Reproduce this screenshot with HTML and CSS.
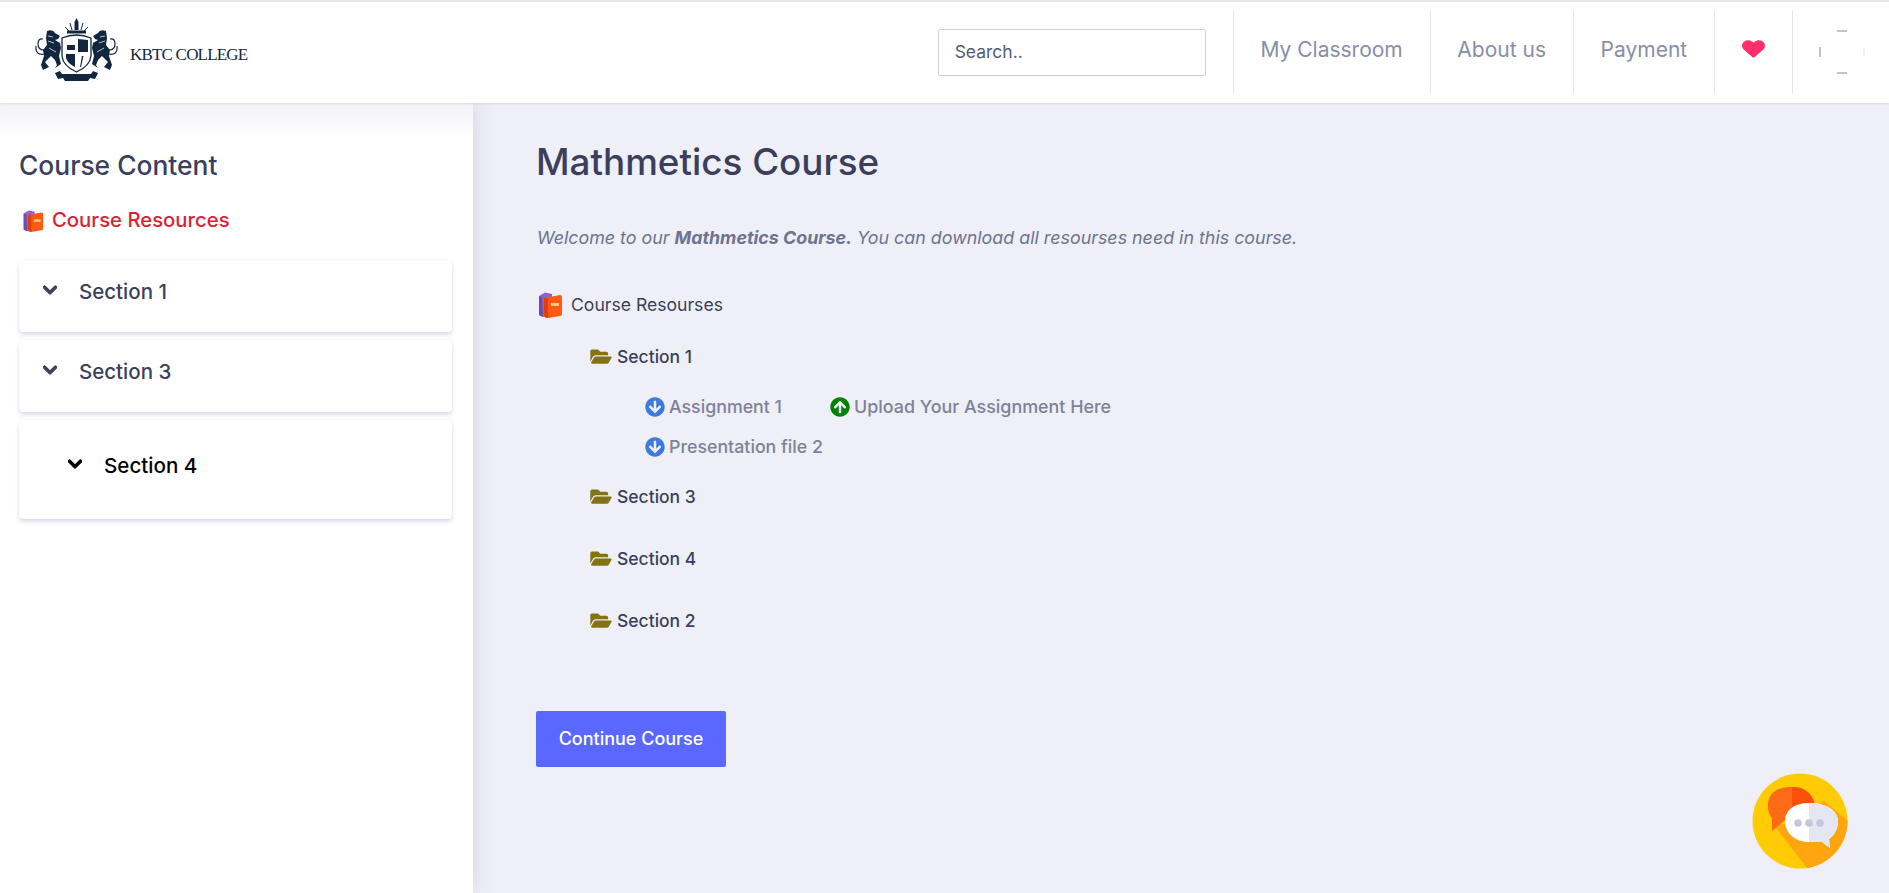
FILE: index.html
```html
<!DOCTYPE HTML>
<html>
<head>
<title>Mathmetics Course</title>
<link rel="stylesheet" href="styles.css">
</head>

<body>
<svg class="defs" width="0" height="0">
    <symbol id="chevron" viewBox="0 0 448 512"><path d="M207.029 381.476L12.686 187.132c-9.373-9.373-9.373-24.569 0-33.941l22.667-22.667c9.357-9.357 24.522-9.375 33.901-.04L224 284.505l154.745-154.021c9.379-9.335 24.544-9.317 33.901.04l22.667 22.667c9.373 9.373 9.373 24.569 0 33.941L240.971 381.476c-9.373 9.372-24.569 9.372-33.942 0z"/></symbol>
    <symbol id="folder" viewBox="0 0 576 512"><path d="M572.694 292.093L500.27 416.248A63.997 63.997 0 0 1 444.989 448H45.025c-18.523 0-30.064-20.093-20.731-36.093l72.424-124.155A64 64 0 0 1 152 256h399.964c18.523 0 30.064 20.093 20.73 36.093zM152 224h328v-48c0-26.51-21.49-48-48-48H272l-64-64H48C21.49 64 0 85.49 0 112v278.046l69.077-118.418C86.214 242.25 117.989 224 152 224z"/></symbol>
    <symbol id="arrow-down" viewBox="0 0 512 512"><path d="M504 256c0 137-111 248-248 248S8 393 8 256 119 8 256 8s248 111 248 248zm-143.6-28.9L288 302.6V120c0-13.3-10.7-24-24-24h-16c-13.3 0-24 10.7-24 24v182.6l-72.4-75.5c-9.3-9.7-24.8-9.9-34.3-.4l-10.9 11c-9.4 9.4-9.4 24.6 0 33.9L239 404.3c9.4 9.4 24.6 9.4 33.9 0l132.7-132.7c9.4-9.4 9.4-24.6 0-33.9l-10.9-11c-9.5-9.5-25-9.3-34.3.4z"/></symbol>
    <symbol id="books" viewBox="0 0 26 26">
        <path fill="#8f63c9" d="M2 4 L8 0.5 L15 2 L15 22 L6 25 L2 23 Z"/>
        <path fill="#6e4bae" d="M2 4 L5 5 L6 25 L2 23 Z"/>
        <path fill="#ff5a14" d="M7 6 L23 3 Q25 3 25 5 L25 22 Q25 24 23 24 L11 26 Q8 26 7 24 Z"/>
        <path fill="#e23e0a" d="M7 6 L11 6 L11 26 Q8 26 7 24 Z"/>
        <rect fill="#ffc77a" x="14" y="11" width="8" height="3"/>
    </symbol>
    <symbol id="lion" viewBox="0 0 27 54">
        <path fill="#12263f" d="M12 3 Q18 1 20 5 L25 8 L23 11 L20 12 L25 15 L26 20 L24 28 L26 36 L20 40 L22 37 L20 32 L16 28 L10 34 L14 39 L8 42 L6 37 L9 28 L8 22 L12 17 L11 10 Z"/>
        <path fill="none" stroke="#12263f" stroke-width="1.2" d="M9 22 Q3 22 3 16 Q3 10 8 11 M10 26 Q0 28 1 18"/>
        <path fill="none" stroke="#fff" stroke-width="0.7" d="M13 8 L18 9 M13 13 L19 15 M14 20 L21 24"/>
    </symbol>
</svg>

<header class="topbar">
    <a class="brand">
        <svg class="crest" width="83" height="64" viewBox="0 0 83 64">
            <g fill="none" stroke="#12263f" stroke-width="1">
                <path d="M30 9 L34 13 M53 9 L49 13 M35 5 L37 12 M48 5 L46 12"/>
            </g>
            <g fill="#12263f">
                <path d="M39.5 4 L41.5 0 L43.5 4 L43.5 12 L39.5 12 Z"/>
                <rect x="32" y="12.5" width="19" height="3"/>
            </g>
            <svg x="0" y="10" width="27" height="54"><use href="#lion"/></svg>
            <g transform="translate(83 0) scale(-1 1)">
                <svg x="0" y="10" width="27" height="54"><use href="#lion"/></svg>
            </g>
            <path d="M27 20 Q41.5 14 56 20 L56 38 Q55 48 41.5 54 Q28 48 27 38 Z" fill="#fff" stroke="#12263f" stroke-width="1.3"/>
            <g fill="#12263f">
                <rect x="32" y="27" width="8" height="5"/>
                <path d="M43 21 L53 22 L53 34 L43 34 Z"/>
                <path d="M31 36 L40 36 L40 49 Q33 46 31 40 Z"/>
                <path d="M47 38 L48.5 38 L46 49 L45 49 Z"/>
                <path d="M20 55 L25 53 L27 56 L56 56 L58 53 L63 55 L60 61 L55 60 L53 63 L30 63 L28 60 L23 61 Z"/>
            </g>
        </svg>
        <span class="brand-name">KBTC COLLEGE</span>
    </a>
    <div class="topbar-right">
        <input class="search" type="text" placeholder="Search..">
        <ul class="nav">
            <li class="nav-item">My Classroom</li>
            <li class="nav-item">About us</li>
            <li class="nav-item">Payment</li>
            <li class="nav-item nav-heart">
                <svg width="23" height="20" viewBox="0 0 512 512" preserveAspectRatio="none"><path fill="#ff2d6a" d="M462.3 62.6C407.5 15.9 326 24.4 275.7 76.3L256 96.6l-19.7-20.3C186.1 24.4 104.5 15.9 49.7 62.6c-62.8 53.6-66.1 149.8-9.9 207.9l193.5 199.8c12.5 12.9 32.8 12.9 45.3 0l193.5-199.8c56.3-58.1 53-154.3-9.8-207.9z"/></svg>
            </li>
            <li class="nav-item nav-avatar">
                <svg width="46" height="44" viewBox="0 0 46 44">
                    <path d="M18 1 H28 M18 43 H28" stroke="#8a8a8a" stroke-width="1" fill="none"/>
                    <path d="M1 17 V27" stroke="#8a8a8a" stroke-width="1" fill="none"/>
                    <path d="M45 17 V27" stroke="#e2e2e2" stroke-width="1" fill="none"/>
                </svg>
            </li>
        </ul>
    </div>
</header>

<div class="page">
    <aside class="sidebar">
        <h2 class="sidebar-title">Course Content</h2>
        <div class="sidebar-res">
            <svg class="book-sm"><use href="#books"/></svg>
            <span>Course Resources</span>
        </div>
        <div class="card">
            <svg class="chev"><use href="#chevron"/></svg>
            <span>Section 1</span>
        </div>
        <div class="card">
            <svg class="chev"><use href="#chevron"/></svg>
            <span>Section 3</span>
        </div>
        <div class="card card-open">
            <svg class="chev"><use href="#chevron"/></svg>
            <span>Section 4</span>
        </div>
    </aside>

    <main class="content">
        <h1 class="title">Mathmetics Course</h1>
        <p class="intro">Welcome to our <b>Mathmetics Course.</b> You can download all resourses need in this course.</p>

        <div class="res-root">
            <svg class="book"><use href="#books"/></svg>
            <span>Course Resourses</span>
        </div>

        <div class="folder folder-first">
            <svg class="folder-icon"><use href="#folder"/></svg>
            <span>Section 1</span>
        </div>
        <div class="files">
            <div class="file-row">
                <span class="file"><svg class="ic ic-down"><use href="#arrow-down"/></svg>Assignment 1</span>
                <span class="file file-upload"><svg class="ic ic-up"><use href="#arrow-down"/></svg>Upload Your Assignment Here</span>
            </div>
            <div class="file-row">
                <span class="file"><svg class="ic ic-down"><use href="#arrow-down"/></svg>Presentation file 2</span>
            </div>
        </div>
        <div class="folder">
            <svg class="folder-icon"><use href="#folder"/></svg>
            <span>Section 3</span>
        </div>
        <div class="folder">
            <svg class="folder-icon"><use href="#folder"/></svg>
            <span>Section 4</span>
        </div>
        <div class="folder">
            <svg class="folder-icon"><use href="#folder"/></svg>
            <span>Section 2</span>
        </div>

        <button class="btn">Continue Course</button>
    </main>
</div>

<svg class="chat" width="96" height="96" viewBox="0 0 96 96">
    <defs><clipPath id="chat-clip"><circle cx="48" cy="48" r="47.5"/></clipPath></defs>
    <circle cx="48" cy="48" r="47.5" fill="#ffcb05"/>
    <path clip-path="url(#chat-clip)" d="M20 50 L38 52 L72 28 L96 48 L96 96 L56 96 Z" fill="#ffa510"/>
    <path d="M41 14 C24 13 15 22 16 34 C16 41 20 45 20 45 L20 58 L38 43 L62 31 C60 20 53 14 41 14 Z" fill="#ff6a14"/>
    <path d="M40 14 C51 14 60 20 63 31 L40 44 Z" fill="#f9500a"/>
    <path d="M57 30 C41 30 33 38 33 48 C33 60 43 69 57 69 L70 69 L78 75 L77 66 C83 62 86 55 86 48 C86 38 75 30 57 30 Z" fill="#fff"/>
    <path d="M57 30 C75 30 86 38 86 48 C86 55 83 62 77 66 L78 75 L70 69 L57 69 Z" fill="#e4e7f1"/>
    <circle cx="46" cy="50" r="3.8" fill="#c3c7dc"/>
    <circle cx="57" cy="50" r="3.8" fill="#c3c7dc"/>
    <circle cx="68" cy="50" r="3.8" fill="#c3c7dc"/>
</svg>
</body>
</html>
```

FILE: styles.css
```css
html, body {
    height: 100%;
}
body {
    margin: 0;
    height: 893px;
    overflow: hidden;
    position: relative;
    background: #eeeff7;
    font-family: "Inter", "Noto Sans", sans-serif;
    color: #3b3f5c;
}
.defs {
    position: absolute;
}

/* top bar */
.topbar {
    display: flex;
    justify-content: space-between;
    height: 93px;
    padding: 8px 24px 0 0;
    background: #fff;
    border-top: 2px solid #e6e6e6;
    position: relative;
    z-index: 2;
    box-shadow: 0 1px 2px rgba(60, 60, 100, 0.12);
}
.brand {
    display: flex;
    align-items: flex-start;
    padding: 8px 0 0 35px;
}
.crest {
    display: block;
}
.brand-name {
    font-family: "Liberation Serif", serif;
    font-size: 17px;
    letter-spacing: -0.8px;
    color: #12263f;
    margin: 27px 0 0 12px;
}
.topbar-right {
    display: flex;
    align-items: flex-start;
}
.search {
    width: 268px;
    height: 47px;
    box-sizing: border-box;
    margin: 19px 27px 0 0;
    padding: 0 16px 2px;
    border: 1px solid #cfcfd6;
    border-radius: 2px;
    font-family: "Inter", sans-serif;
    font-size: 17.5px;
    outline: none;
}
.search::placeholder {
    color: #555a70;
    opacity: 1;
}
.nav {
    display: flex;
    list-style-type: none;
    margin: 0;
    padding: 0;
}
.nav-item {
    display: flex;
    align-items: center;
    height: 84px;
    padding: 0 26.8px 6px;
    border-left: 1px solid #e6e6ea;
    font-size: 21px;
    color: #888ea8;
    box-sizing: border-box;
}
.nav-heart {
    width: 78px;
    justify-content: center;
    padding: 0 0 6px;
}
.nav-avatar {
    padding: 0 0 0 26px;
}

/* page columns */
.page {
    display: flex;
    height: 790px;
}
.sidebar {
    width: 473px;
    box-sizing: border-box;
    padding: 46px 21px 0 19px;
    background: linear-gradient(#f3f3f8, #fff 36px);
    box-shadow: 0 0 20px rgba(80, 80, 130, 0.17);
    position: relative;
    z-index: 1;
}
.sidebar-title {
    margin: 0;
    font-size: 26.4px;
    line-height: 32px;
    font-weight: 500;
}
.sidebar-res {
    display: flex;
    align-items: center;
    margin-top: 25px;
    font-size: 20.3px;
    font-weight: 500;
    color: #dc1f37;
    line-height: 28px;
}
.book-sm {
    width: 22px;
    height: 26px;
    margin: 2px 8px 0 3px;
}
.card {
    display: flex;
    align-items: flex-start;
    height: 72px;
    box-sizing: border-box;
    margin-top: 8px;
    padding: 20px 0 0 24px;
    background: #fff;
    border-radius: 4px;
    font-size: 20.5px;
    font-weight: 500;
    line-height: 24px;
    box-shadow: 0 3px 4px rgba(90, 90, 160, 0.2), 0 0 2px rgba(90, 90, 160, 0.08);
}
.sidebar-res + .card {
    margin-top: 26px;
}
.chev {
    width: 14px;
    height: 16px;
    margin: 2px 22px 0 0;
    fill: #3b3f5c;
    stroke: #3b3f5c;
    stroke-width: 34px;
}
.card-open {
    height: 99px;
    padding: 34px 0 0 49px;
    color: #000;
    font-size: 20.6px;
}
.card-open .chev {
    fill: #000;
    stroke: #000;
}

/* main column */
.content {
    flex: 1;
    padding: 38px 0 0 63px;
    box-sizing: border-box;
}
.title {
    margin: 0;
    font-size: 36.8px;
    line-height: 42px;
    font-weight: 500;
}
.intro {
    margin: 42px 0 0 1px;
    font-size: 17.85px;
    line-height: 26px;
    font-style: italic;
    color: #6e7390;
}
.res-root {
    display: flex;
    align-items: center;
    margin-top: 41px;
    font-size: 17.6px;
    line-height: 26px;
}
.book {
    width: 26px;
    height: 26px;
    margin: 0 8px 0 1px;
}
.folder {
    display: flex;
    align-items: center;
    margin: 37px 0 0 54px;
    font-size: 17.5px;
    line-height: 25px;
    font-weight: 500;
}
.folder-first {
    margin-top: 26px;
}
.folder-icon {
    width: 22px;
    height: 19px;
    margin-right: 5px;
    fill: #857214;
}
.files {
    margin: 25px 0 0 109px;
}
.file-row {
    display: flex;
    margin-bottom: 14px;
}
.file {
    display: flex;
    align-items: center;
    font-size: 17.8px;
    line-height: 26px;
    color: #7e8299;
    font-weight: 500;
}
.file-upload {
    margin-left: 48px;
    font-size: 17.9px;
}
.ic {
    width: 20px;
    height: 20px;
    margin-right: 4px;
}
.ic-down {
    fill: #3f7ade;
}
.ic-up {
    fill: #078007;
    transform: rotate(180deg);
}
.files + .folder {
    margin-top: 24px;
}
.btn {
    display: block;
    width: 190px;
    height: 56px;
    margin-top: 78px;
    padding: 0 0 2px;
    border: 0;
    border-radius: 2px;
    background: #5a68ff;
    color: #fff;
    font-family: "Inter", sans-serif;
    font-size: 18px;
    font-weight: 500;
}

/* floating chat button */
.chat {
    position: absolute;
    left: 1752px;
    top: 773px;
    z-index: 3;
}
```
